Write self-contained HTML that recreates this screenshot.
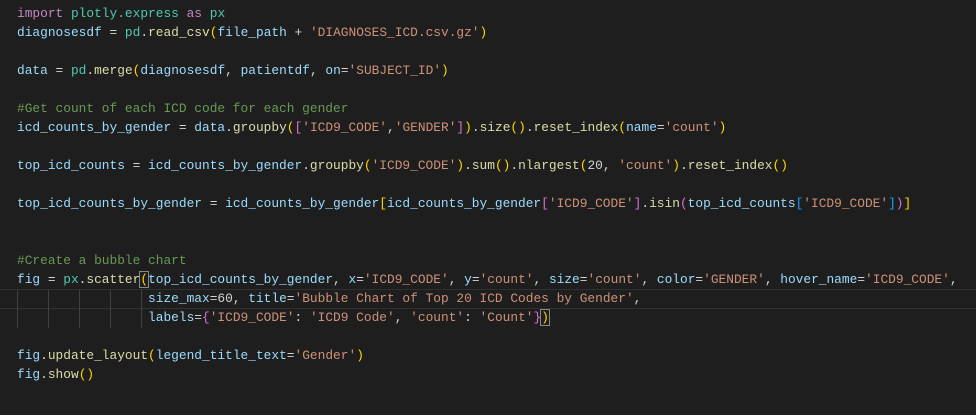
<!DOCTYPE html>
<html><head><style>
body{margin:0;background:#1e1e1e;width:976px;height:415px;overflow:hidden}
pre{margin:0;position:absolute;left:17px;top:4px;font-family:"Liberation Mono",monospace;font-size:12.85px;line-height:19px;color:#d4d4d4}
.k{color:#c586c0}.m{color:#4ec9b0}.v{color:#9cdcfe}.f{color:#dcdcaa}.s{color:#ce9178}.c{color:#6a9955}.y{color:#ffd700}.p{color:#da70d6}.b{color:#179fff}
.g{position:absolute;width:1px;background:#404040}
.hl{position:absolute;left:0;right:0;border-top:1px solid #303030;border-bottom:1px solid #303030}
.br{outline:1px solid #888}
</style></head><body>
<div class="hl" style="top:289px;height:18px"></div>
<div class="g" style="left:17px;top:290px;height:38px"></div>
<div class="g" style="left:48px;top:290px;height:38px"></div>
<div class="g" style="left:79px;top:290px;height:38px"></div>
<div class="g" style="left:110px;top:290px;height:38px"></div>
<div class="g" style="left:141px;top:290px;height:38px"></div>
<pre><span class="k">import</span> <span class="m">plotly.express</span> <span class="k">as</span> <span class="m">px</span>
<span class="v">diagnosesdf</span> = <span class="m">pd</span>.<span class="f">read_csv</span><span class="y">(</span><span class="v">file_path</span> + <span class="s">'DIAGNOSES_ICD.csv.gz'</span><span class="y">)</span>

<span class="v">data</span> = <span class="m">pd</span>.<span class="f">merge</span><span class="y">(</span><span class="v">diagnosesdf</span>, <span class="v">patientdf</span>, <span class="v">on</span>=<span class="s">'SUBJECT_ID'</span><span class="y">)</span>

<span class="c">#Get count of each ICD code for each gender</span>
<span class="v">icd_counts_by_gender</span> = <span class="v">data</span>.<span class="f">groupby</span><span class="y">(</span><span class="p">[</span><span class="s">'ICD9_CODE'</span>,<span class="s">'GENDER'</span><span class="p">]</span><span class="y">)</span>.<span class="f">size</span><span class="y">()</span>.<span class="f">reset_index</span><span class="y">(</span><span class="v">name</span>=<span class="s">'count'</span><span class="y">)</span>

<span class="v">top_icd_counts</span> = <span class="v">icd_counts_by_gender</span>.<span class="f">groupby</span><span class="y">(</span><span class="s">'ICD9_CODE'</span><span class="y">)</span>.<span class="f">sum</span><span class="y">()</span>.<span class="f">nlargest</span><span class="y">(</span>20, <span class="s">'count'</span><span class="y">)</span>.<span class="f">reset_index</span><span class="y">()</span>

<span class="v">top_icd_counts_by_gender</span> = <span class="v">icd_counts_by_gender</span><span class="y">[</span><span class="v">icd_counts_by_gender</span><span class="p">[</span><span class="s">'ICD9_CODE'</span><span class="p">]</span>.<span class="f">isin</span><span class="p">(</span><span class="v">top_icd_counts</span><span class="b">[</span><span class="s">'ICD9_CODE'</span><span class="b">]</span><span class="p">)</span><span class="y">]</span>


<span class="c">#Create a bubble chart</span>
<span class="v">fig</span> = <span class="m">px</span>.<span class="f">scatter</span><span class="y br">(</span><span class="v">top_icd_counts_by_gender</span>, <span class="v">x</span>=<span class="s">'ICD9_CODE'</span>, <span class="v">y</span>=<span class="s">'count'</span>, <span class="v">size</span>=<span class="s">'count'</span>, <span class="v">color</span>=<span class="s">'GENDER'</span>, <span class="v">hover_name</span>=<span class="s">'ICD9_CODE'</span>,
                 <span class="v">size_max</span>=60, <span class="v">title</span>=<span class="s">'Bubble Chart of Top 20 ICD Codes by Gender'</span>,
                 <span class="v">labels</span>=<span class="p">{</span><span class="s">'ICD9_CODE'</span>: <span class="s">'ICD9 Code'</span>, <span class="s">'count'</span>: <span class="s">'Count'</span><span class="p">}</span><span class="y br">)</span>

<span class="v">fig</span>.<span class="f">update_layout</span><span class="y">(</span><span class="v">legend_title_text</span>=<span class="s">'Gender'</span><span class="y">)</span>
<span class="v">fig</span>.<span class="f">show</span><span class="y">()</span></pre>
</body></html>
